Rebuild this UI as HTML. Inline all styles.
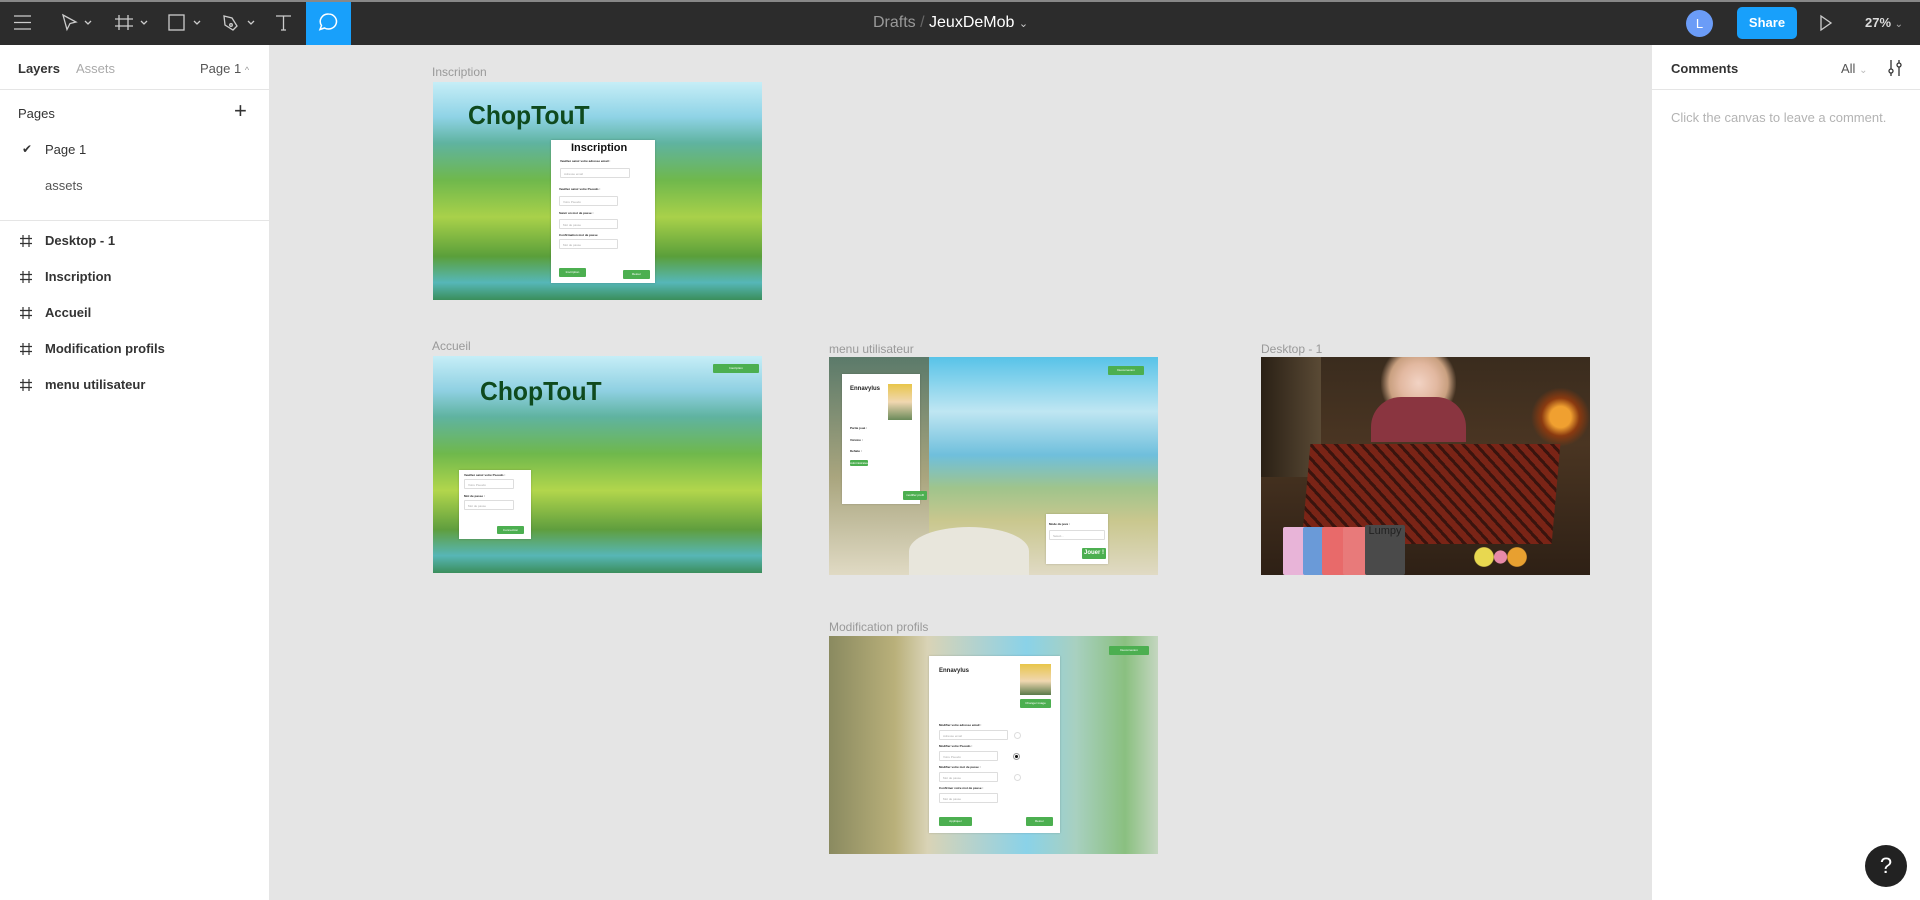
<!DOCTYPE html>
<html><head><meta charset="utf-8"><style>
*{margin:0;padding:0;box-sizing:border-box}
body{width:1920px;height:900px;overflow:hidden;background:#e5e5e5;font-family:"Liberation Sans",sans-serif;position:relative}
.a{position:absolute}
.top{left:0;top:0;width:1920px;height:45px;background:#2c2c2c;border-top:2px solid #888}
.lp{left:0;top:45px;width:270px;height:855px;background:#fff;border-right:1px solid #e5e5e5}
.rp{left:1651px;top:45px;width:269px;height:855px;background:#fff;border-left:1px solid #e5e5e5}
.t{font-size:13px;color:#333;white-space:nowrap}
.b{font-weight:bold}
.lbl{font-size:13px;color:#999;white-space:nowrap}
.fr{overflow:hidden}
.card{background:#fff;position:absolute;box-shadow:0 0 2px rgba(0,0,0,.2)}
.s{font-size:3px;color:#222;position:absolute;white-space:nowrap;font-weight:bold}
.in{position:absolute;border:1px solid #ddd;background:#fff;height:10px;border-radius:1px}
.in span{font-size:3px;color:#aaa;position:absolute;left:3px;top:3px}
.btn{position:absolute;background:#4caf50;border-radius:1px;color:#fff;font-size:3px;text-align:center}
.hash{position:absolute;left:19px}
.logo{font-family:"Liberation Sans Narrow","Liberation Sans",sans-serif;font-weight:bold;color:#0f4a1e;font-size:26px;transform:scaleX(.95);transform-origin:left}
</style></head><body>
<div class="a top">
<svg class="a" style="left:0;top:-2px" width="360" height="45" fill="none" stroke="#ccc" stroke-width="1.3">
<path d="M14 16h17M14 22.5h17M14 29h17"/>
<path d="M63 15l13 7-6 1.5-3 6z"/><path d="M85 21l3 3 3-3M141 21l3 3 3-3M194 21l3 3 3-3M248 21l3 3 3-3"/>
<path d="M119 15v15M128 15v15M115 19h18M115 26h18"/>
<rect x="169" y="15" width="15" height="15"/>
<path d="M224 16l8 2 5 8-4 4-8-5z"/><circle cx="231" cy="25" r="1.3"/>
<path d="M276 16h15M283.5 16v14M281 30h5"/>
</svg>
<div class="a" style="left:306px;top:0;width:45px;height:43px;background:#18a0fb"></div>
<svg class="a" style="left:306px;top:-2px" width="45" height="45" fill="none" stroke="#fff" stroke-width="1.5"><path d="M22.5 14a8 7.5 0 1 1-4 14l-4.5 1.5 1.5-4a8 7.5 0 0 1 7-11.5z"/></svg>
<div class="a" style="left:873px;top:12px;font-size:16px;color:#999;white-space:nowrap">Drafts <span style="color:#666">/</span> <span style="color:#fff">JeuxDeMob</span> <span style="color:#ccc;font-size:11px">⌄</span></div>
<div class="a" style="left:1686px;top:8px;width:27px;height:27px;border-radius:50%;background:#6b9cf7;color:#fff;font-size:13px;text-align:center;line-height:27px">L</div>
<div class="a" style="left:1737px;top:5px;width:60px;height:32px;border-radius:5px;background:#18a0fb;color:#fff;font-size:13px;font-weight:bold;text-align:center;line-height:32px">Share</div>
<svg class="a" style="left:1818px;top:11px" width="16" height="20" fill="none" stroke="#ccc" stroke-width="1.3"><path d="M3 3l10 7-10 7z"/></svg>
<div class="a" style="left:1865px;top:13px;font-size:13px;color:#ddd;font-weight:bold">27% <span style="font-weight:normal;color:#aaa;font-size:10px">⌄</span></div>
</div>

<div class="a lp">
<div class="a t b" style="left:18px;top:16px">Layers</div>
<div class="a t" style="left:76px;top:16px;color:#aaa">Assets</div>
<div class="a t" style="left:200px;top:16px;color:#555">Page 1 <span style="font-size:9px;color:#999">^</span></div>
<div class="a" style="left:0;top:44px;width:270px;height:1px;background:#e5e5e5"></div>
<div class="a t" style="left:18px;top:61px">Pages</div>
<div class="a" style="left:234px;top:53px;font-size:22px;color:#333;font-weight:300">+</div>
<div class="a t" style="left:22px;top:97px;font-size:12px">✔</div>
<div class="a t" style="left:45px;top:97px">Page 1</div>
<div class="a t" style="left:45px;top:133px;color:#555">assets</div>
<div class="a" style="left:0;top:175px;width:270px;height:1px;background:#e5e5e5"></div>
<svg class="hash" style="top:189px" width="14" height="14" fill="none" stroke="#333" stroke-width="1.2"><path d="M4 1v12M10 1v12M1 4.5h12M1 9.5h12"/></svg><div class="a t b" style="left:45px;top:188px">Desktop - 1</div>
<svg class="hash" style="top:225px" width="14" height="14" fill="none" stroke="#333" stroke-width="1.2"><path d="M4 1v12M10 1v12M1 4.5h12M1 9.5h12"/></svg><div class="a t b" style="left:45px;top:224px">Inscription</div>
<svg class="hash" style="top:261px" width="14" height="14" fill="none" stroke="#333" stroke-width="1.2"><path d="M4 1v12M10 1v12M1 4.5h12M1 9.5h12"/></svg><div class="a t b" style="left:45px;top:260px">Accueil</div>
<svg class="hash" style="top:297px" width="14" height="14" fill="none" stroke="#333" stroke-width="1.2"><path d="M4 1v12M10 1v12M1 4.5h12M1 9.5h12"/></svg><div class="a t b" style="left:45px;top:296px">Modification profils</div>
<svg class="hash" style="top:333px" width="14" height="14" fill="none" stroke="#333" stroke-width="1.2"><path d="M4 1v12M10 1v12M1 4.5h12M1 9.5h12"/></svg><div class="a t b" style="left:45px;top:332px">menu utilisateur</div>
</div>

<div class="a rp">
<div class="a t b" style="left:19px;top:16px">Comments</div>
<div class="a t" style="left:189px;top:16px;color:#555">All <span style="color:#bbb;font-size:10px">⌄</span></div>
<svg class="a" style="left:234px;top:13px" width="18" height="20" fill="none" stroke="#333" stroke-width="1.3"><path d="M5 2v9M5 15v3M13 2v3M13 9v9"/><circle cx="5" cy="13" r="2"/><circle cx="13" cy="7" r="2"/></svg>
<div class="a" style="left:0;top:44px;width:269px;height:1px;background:#e5e5e5"></div>
<div class="a t" style="left:19px;top:65px;color:#b3b3b3">Click the canvas to leave a comment.</div>
</div>
<div class="a" style="left:1865px;top:845px;width:42px;height:42px;border-radius:50%;background:#222;color:#fff;font-size:22px;text-align:center;line-height:42px">?</div>

<!-- Inscription -->
<div class="a lbl" style="left:432px;top:65px;font-size:12px">Inscription</div>
<div class="a fr" style="left:433px;top:82px;width:329px;height:218px;background:linear-gradient(180deg,#c6eef7 0%,#8fd3e6 16%,#5fb3a0 28%,#6fb84c 45%,#a9d14a 62%,#5a9f3a 80%,#56b7b8 92%,#3a8e5b 100%)">
<div class="a logo" style="left:35px;top:18px">ChopTouT</div>
<div class="card" style="left:118px;top:58px;width:104px;height:143px">
<div class="s" style="left:20px;top:2px;font-size:11px;color:#111">Inscription</div>
<div class="s" style="left:9px;top:19px">Veuillez saisir votre adresse email :</div>
<div class="in" style="left:9px;top:28px;width:70px"><span>Adresse email</span></div>
<div class="s" style="left:8px;top:47px">Veuillez saisir votre Pseudo :</div>
<div class="in" style="left:8px;top:56px;width:59px"><span>Votre Pseudo</span></div>
<div class="s" style="left:8px;top:71px">Saisir un mot de passe :</div>
<div class="in" style="left:8px;top:79px;width:59px"><span>Mot de passe</span></div>
<div class="s" style="left:8px;top:93px">Confirmation mot de passe</div>
<div class="in" style="left:8px;top:99px;width:59px"><span>Mot de passe</span></div>
<div class="btn" style="left:8px;top:128px;width:27px;height:9px;line-height:9px">Inscription</div>
<div class="btn" style="left:72px;top:130px;width:27px;height:9px;line-height:9px">Retour</div>
</div></div>

<!-- Accueil -->
<div class="a lbl" style="left:432px;top:339px;font-size:12px">Accueil</div>
<div class="a fr" style="left:433px;top:356px;width:329px;height:217px;background:linear-gradient(180deg,#c6eef7 0%,#8fd0e2 16%,#5fb3a0 28%,#6fb84c 45%,#b2d64c 62%,#5f9e3e 80%,#57b6b6 92%,#3b8e5c 100%)">
<div class="a logo" style="left:47px;top:20px">ChopTouT</div>
<div class="btn" style="left:280px;top:8px;width:46px;height:9px;line-height:9px">Inscription</div>
<div class="card" style="left:26px;top:114px;width:72px;height:69px">
<div class="s" style="left:5px;top:3px">Veuillez saisir votre Pseudo :</div>
<div class="in" style="left:5px;top:9px;width:50px"><span>Votre Pseudo</span></div>
<div class="s" style="left:5px;top:24px">Mot de passe :</div>
<div class="in" style="left:5px;top:30px;width:50px"><span>Mot de passe</span></div>
<div class="btn" style="left:38px;top:56px;width:27px;height:8px;line-height:8px">Connection</div>
</div></div>

<!-- menu utilisateur -->
<div class="a lbl" style="left:829px;top:342px;font-size:12px">menu utilisateur</div>
<div class="a fr" style="left:829px;top:357px;width:329px;height:218px;background:linear-gradient(180deg,#58c3e8 0%,#bfe6f2 25%,#6fbfdc 45%,#9fc48c 60%,#c9c78e 75%,#e0dac4 100%)">
<div class="a" style="left:0;top:0;width:100px;height:218px;background:linear-gradient(180deg,#5b7a6a,#a9a57e 55%,#e0dac4)"></div>
<div class="a" style="left:80px;top:170px;width:120px;height:48px;background:#e8e6dc;border-radius:50% 50% 0 0"></div>
<div class="btn" style="left:279px;top:9px;width:36px;height:9px;line-height:9px">Deconnexion</div>
<div class="card" style="left:13px;top:17px;width:78px;height:130px">
<div class="s" style="left:8px;top:12px;font-size:6px">Ennavylus</div>
<div class="a" style="left:46px;top:10px;width:24px;height:36px;background:linear-gradient(180deg,#e8c54a,#f0d7b0 50%,#6a8a5a)"></div>
<div class="s" style="left:8px;top:52px">Partie joué :</div>
<div class="s" style="left:8px;top:64px">Victoire :</div>
<div class="s" style="left:8px;top:75px">Defaite :</div>
<div class="btn" style="left:8px;top:86px;width:18px;height:6px;line-height:6px">Administrateur</div>
<div class="btn" style="left:61px;top:117px;width:24px;height:9px;line-height:9px">modifier profil</div>
</div>
<div class="card" style="left:217px;top:157px;width:62px;height:50px">
<div class="s" style="left:3px;top:8px">Mode du jeux :</div>
<div class="in" style="left:3px;top:16px;width:56px"><span>Select...</span></div>
<div class="btn" style="left:36px;top:34px;width:24px;height:11px;line-height:11px;font-size:6px;font-weight:bold">Jouer !</div>
</div></div>

<!-- Desktop - 1 -->
<div class="a lbl" style="left:1261px;top:342px;font-size:12px">Desktop - 1</div>
<div class="a fr" style="left:1261px;top:357px;width:329px;height:218px;background:linear-gradient(180deg,#3a2c1e,#4a3522 40%,#2e2015 100%)">
<div class="btn" style="left:4px;top:5px;width:18px;height:7px;line-height:7px">Abandonner</div>
<div class="a" style="left:0;top:0;width:60px;height:120px;background:linear-gradient(90deg,#2a2015,#5a4a35)"></div>
<div class="a" style="left:270px;top:30px;width:59px;height:60px;background:radial-gradient(circle,#f0a030 0 25%,#8a3a10 45%,transparent 70%)"></div>
<div class="a" style="left:120px;top:0;width:75px;height:65px;background:radial-gradient(ellipse at 50% 40%,#f2d3c4 0%,#e2b8a0 35%,#c9a080 55%,transparent 72%)"></div>
<div class="a" style="left:110px;top:40px;width:95px;height:45px;background:#8a3540;border-radius:30px 30px 0 0"></div>
<div class="a" style="left:45px;top:87px;width:250px;height:100px;background:repeating-linear-gradient(45deg,#7a2416 0 6px,#3a140e 6px 9px);transform:skewX(-5deg)"></div>
<div class="a" style="left:22px;top:170px;width:25px;height:48px;background:#e8b4d8;border-radius:2px"></div>
<div class="a" style="left:42px;top:170px;width:25px;height:48px;background:#6a9ad8;border-radius:2px"></div>
<div class="a" style="left:61px;top:170px;width:25px;height:48px;background:#e86a6a;border-radius:2px"></div>
<div class="a" style="left:82px;top:170px;width:25px;height:48px;background:#e87a7a;border-radius:2px"></div>
<div class="a" style="left:104px;top:168px;width:40px;height:50px;background:#4a4a4a;border-radius:2px;font-size:11px;color:#222;text-align:center">Lumpy</div>
<div class="a" style="left:212px;top:185px;width:55px;height:30px;background:radial-gradient(circle at 20% 50%,#e8d850 0 20%,transparent 22%),radial-gradient(circle at 50% 50%,#e88aa8 0 20%,transparent 22%),radial-gradient(circle at 80% 50%,#e8a030 0 20%,transparent 22%)"></div>
</div>

<!-- Modification profils -->
<div class="a lbl" style="left:829px;top:620px;font-size:12px">Modification profils</div>
<div class="a fr" style="left:829px;top:636px;width:329px;height:218px;background:linear-gradient(90deg,#8a8a60 0%,#b9b07a 20%,#d9d3b6 30%,#8ad2e8 60%,#a8d0c0 75%,#8ac080 90%,#c4d6c0 100%)">
<div class="btn" style="left:280px;top:10px;width:40px;height:9px;line-height:9px">Deconnexion</div>
<div class="card" style="left:100px;top:20px;width:131px;height:177px">
<div class="s" style="left:10px;top:12px;font-size:6px">Ennavylus</div>
<div class="a" style="left:91px;top:8px;width:31px;height:31px;background:linear-gradient(180deg,#e8c54a,#f0d7b0 55%,#5a7a4a)"></div>
<div class="btn" style="left:91px;top:43px;width:31px;height:9px;line-height:9px">Changer image</div>
<div class="s" style="left:10px;top:67px">Modifier votre adresse email :</div>
<div class="in" style="left:10px;top:74px;width:69px"><span>Adresse email</span></div>
<div class="s" style="left:10px;top:88px">Modifier votre Pseudo :</div>
<div class="in" style="left:10px;top:95px;width:59px"><span>Votre Pseudo</span></div>
<div class="s" style="left:10px;top:109px">Modifier votre mot de passe :</div>
<div class="in" style="left:10px;top:116px;width:59px"><span>Mot de passe</span></div>
<div class="s" style="left:10px;top:130px">Confirmer votre mot de passe :</div>
<div class="in" style="left:10px;top:137px;width:59px"><span>Mot de passe</span></div>
<div class="a" style="left:85px;top:76px;width:7px;height:7px;border-radius:50%;border:1px solid #ddd"></div>
<div class="a" style="left:84px;top:97px;width:7px;height:7px;border-radius:50%;border:1px solid #999;background:radial-gradient(#111 40%,#fff 45%)"></div>
<div class="a" style="left:85px;top:118px;width:7px;height:7px;border-radius:50%;border:1px solid #ddd"></div>
<div class="btn" style="left:10px;top:161px;width:33px;height:9px;line-height:9px">Appliquer</div>
<div class="btn" style="left:97px;top:161px;width:27px;height:9px;line-height:9px">Retour</div>
</div></div>
</body></html>
